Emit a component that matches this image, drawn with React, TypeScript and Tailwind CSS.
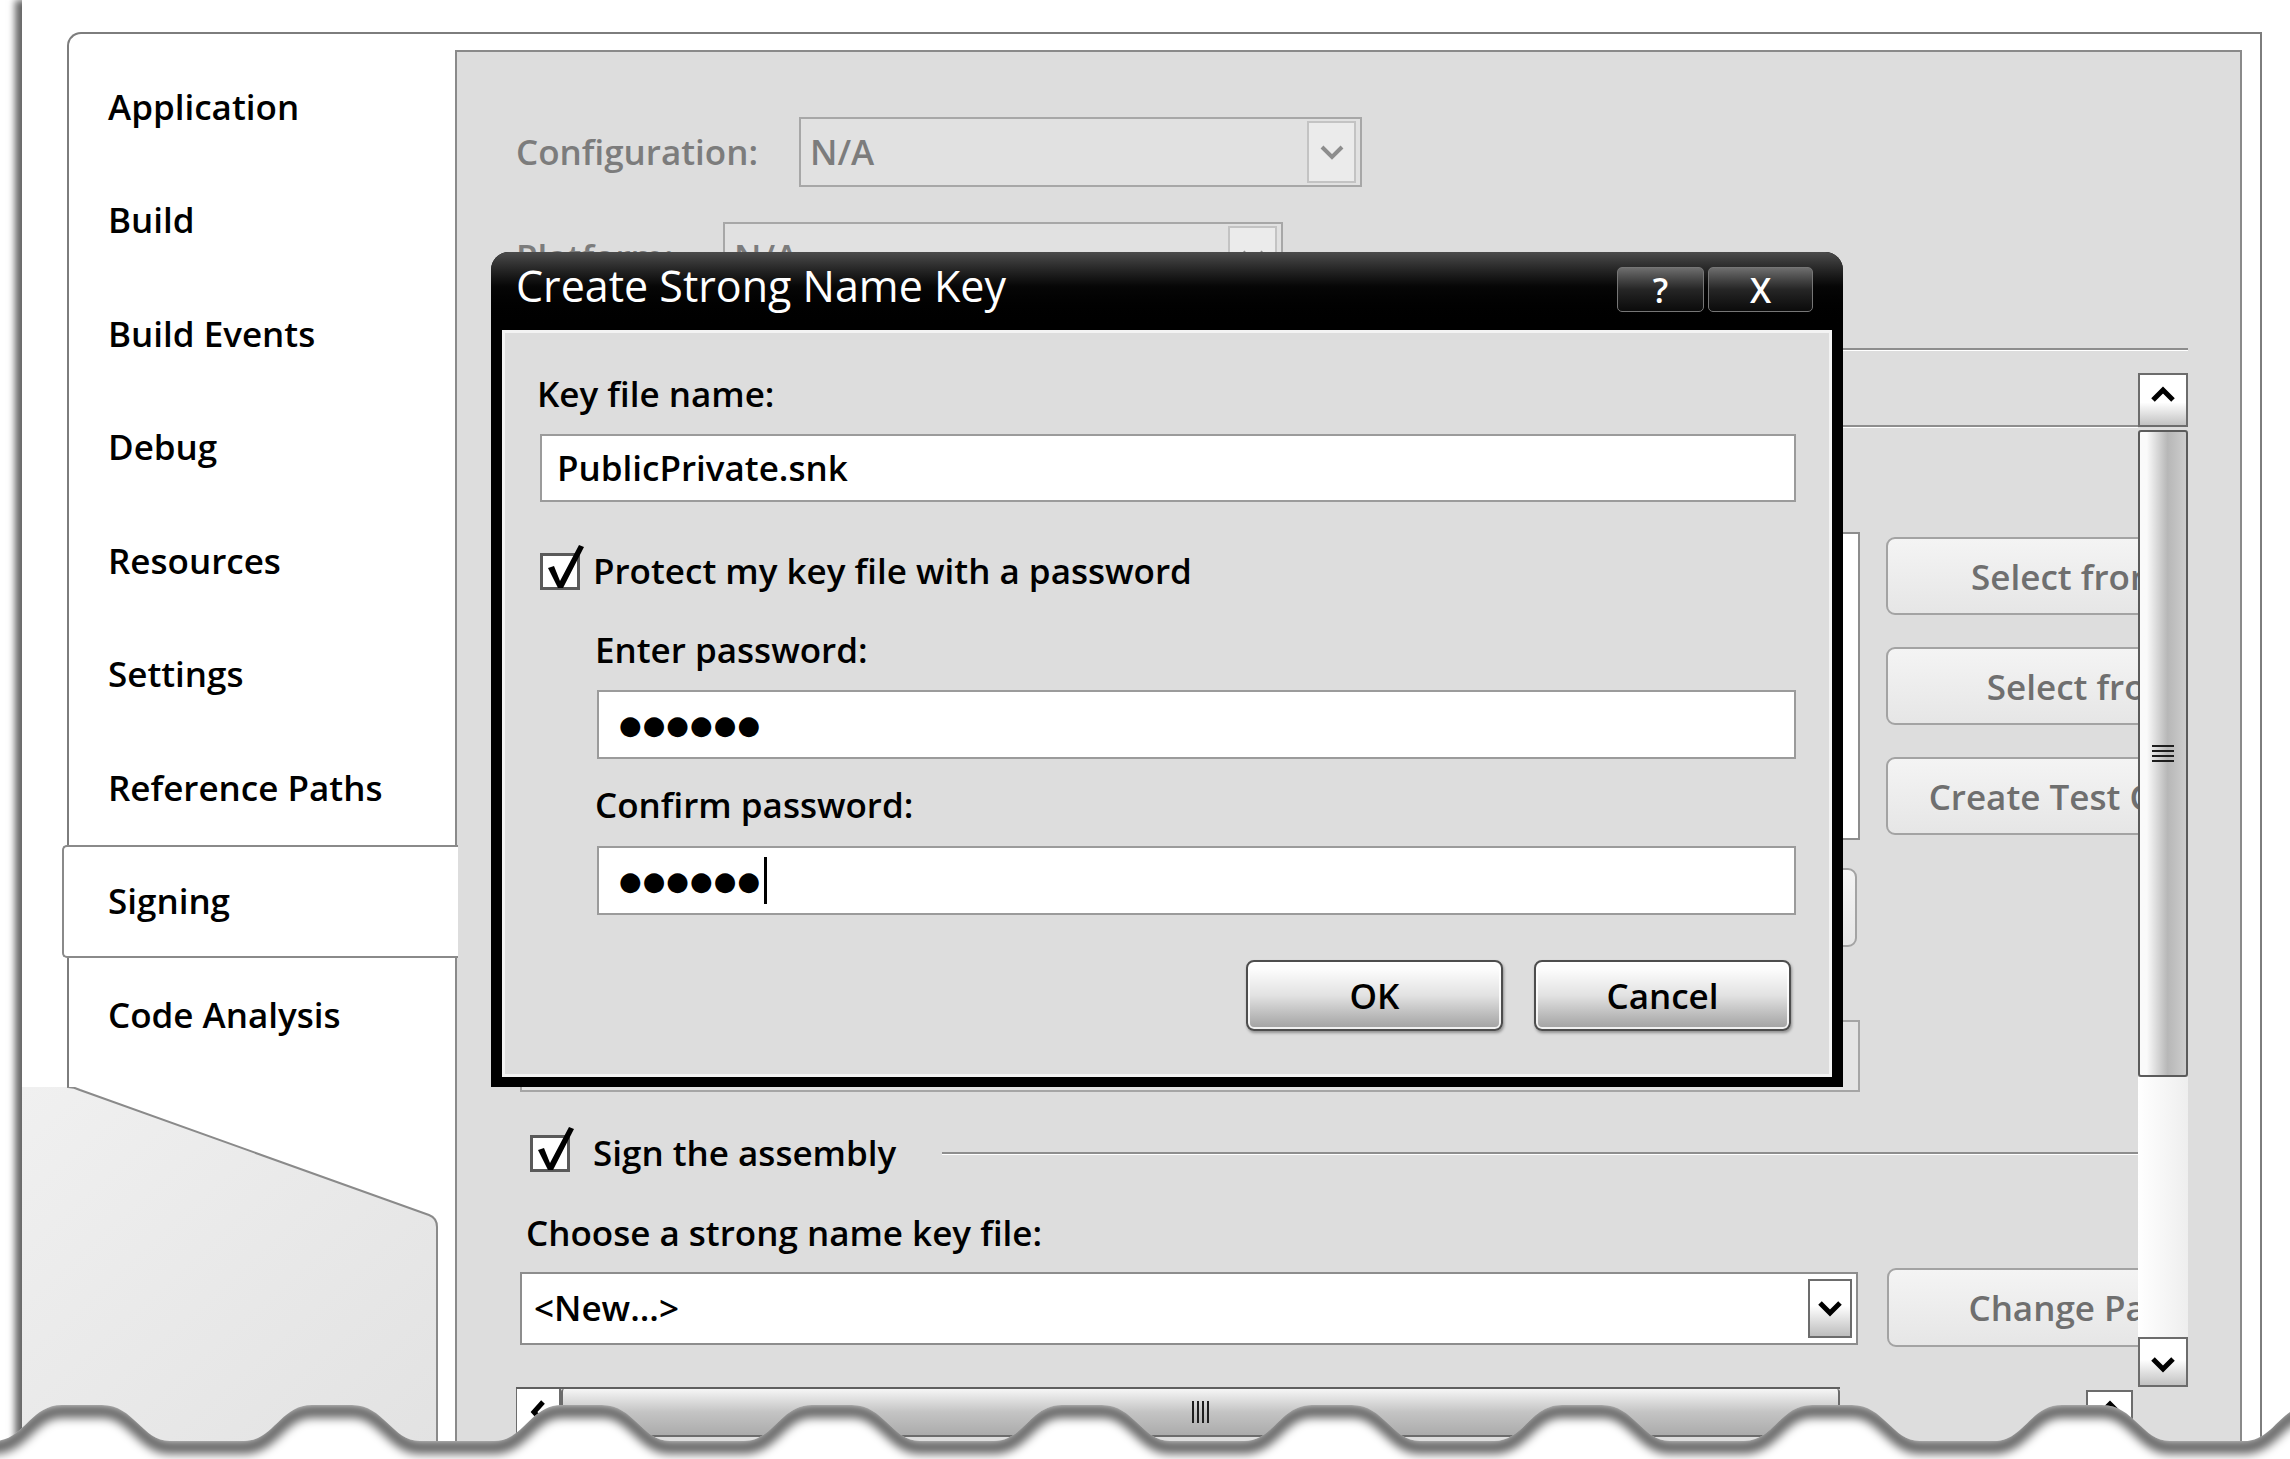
import React from "react";

const tabs = [
  "Application",
  "Build",
  "Build Events",
  "Debug",
  "Resources",
  "Settings",
  "Reference Paths",
  "Signing",
  "Code Analysis",
];

function Chevron({ dir, color = "#000", stroke = 5 }: { dir: "up" | "down" | "left"; color?: string; stroke?: number }) {
  const d = dir === "up" ? "M3 14 L13 4 L23 14" : dir === "down" ? "M3 3 L13 13 L23 3" : "M14 3 L5 13 L14 23";
  const size = dir === "left" ? { w: 18, h: 26 } : { w: 26, h: 17 };
  return (
    <svg width={size.w} height={size.h} viewBox={`0 0 ${size.w} ${size.h}`}>
      <path d={d} fill="none" stroke={color} strokeWidth={stroke} />
    </svg>
  );
}

function CheckBox() {
  return (
    <div className="relative h-[37px] w-[40px] shrink-0 border-[3px] border-[#5a5a5a] bg-white">
      <svg className="absolute -top-[14px] left-0" width="44" height="50" viewBox="0 0 44 50">
        <polygon points="5,26 11,24 17,39 36,3 41,5 20,46 15,46" fill="#000" />
      </svg>
    </div>
  );
}

function DisabledCombo({ className, value }: { className: string; value: string }) {
  return (
    <div className={`flex h-[70px] shrink-0 items-center border-2 border-[#a7a7a7] bg-[#e1e1e1] pl-[9px] pr-[4px] ${className}`}>
      <span className="flex-1 text-[35px] leading-[50px] text-[#7c7c7c]">{value}</span>
      <div className="flex h-[62px] w-[49px] items-center justify-center border-2 border-[#c3c3c3] bg-[#ebebeb]">
        <Chevron dir="down" color="#8d8d8d" stroke={4} />
      </div>
    </div>
  );
}

function GhostButton({ label, className }: { label: string; className: string }) {
  return (
    <div
      className={`flex w-[490px] shrink-0 items-center justify-center rounded-[9px] border-2 border-[#a3a3a3] bg-linear-to-b from-[#f4f4f4] to-[#e6e6e6] text-[35px] leading-none text-[#6f6f6f] ${className}`}
    >
      {label}
    </div>
  );
}

function DialogButton({ label }: { label: string }) {
  return (
    <div className="flex h-[71px] w-[257px] items-center justify-center rounded-[8px] border-2 border-[#4d4d4d] bg-linear-to-b from-[#fdfdfd] from-10% via-[#e2e2e2] via-50% to-[#a1a1a1] text-[35px] leading-none text-black shadow-[inset_0_0_0_2px_rgba(255,255,255,0.85),1px_2px_3px_rgba(0,0,0,0.35)]">
      {label}
    </div>
  );
}

function TitleButton({ label, className }: { label: string; className: string }) {
  return (
    <div
      className={`flex h-[45px] items-center justify-center rounded-[5px] border border-[#767676] bg-linear-to-b from-[#6e6e6e] via-[#262626] to-[#0b0b0b] text-[34px] leading-none text-white ${className}`}
    >
      {label}
    </div>
  );
}

function VScrollBar() {
  return (
    <div className="flex w-[50px] shrink-0 flex-col">
      <div className="flex h-[54px] shrink-0 items-start justify-center border-2 border-[#6c6c6c] bg-linear-to-b from-white from-55% to-[#c2c2c2] pt-[11px]">
        <Chevron dir="up" />
      </div>
      <div className="mt-[3px] flex h-[647px] shrink-0 items-center justify-center rounded-[3px] border-2 border-[#5b5b5b] bg-linear-to-r from-[#fafafa] from-15% via-[#b7b7b7] via-60% to-[#cdcdcd]">
        <div className="flex flex-col gap-[3px]">
          {[0, 1, 2, 3].map((i) => (
            <div key={i} className="h-[2px] w-[22px] bg-[#1e1e1e]" />
          ))}
        </div>
      </div>
      <div className="h-[260px] shrink-0 bg-linear-to-r from-white to-[#eeeeee]" />
      <div className="flex h-[50px] shrink-0 items-end justify-center border-2 border-[#6c6c6c] bg-linear-to-b from-white from-45% to-[#c2c2c2] pb-[12px]">
        <Chevron dir="down" />
      </div>
    </div>
  );
}

function LeftColumn() {
  return (
    <div className="flex w-[433px] shrink-0 flex-col">
      <div className="h-[32px] shrink-0" />
      <div className="ml-[45px] h-[1055px] shrink-0 rounded-tl-[14px] border-l-2 border-t-2 border-[#7d7d7d] bg-white pt-[16px]">
        {tabs.map((t) =>
          t === "Signing" ? (
            <div
              key={t}
              className="relative z-10 -ml-[7px] -mr-[3px] flex h-[113.5px] items-center rounded-l-[5px] border-y-2 border-l-2 border-[#8a8a8a] bg-white pl-[44px] text-[35px]"
            >
              {t}
            </div>
          ) : (
            <div key={t} className="flex h-[113.5px] items-center pl-[39px] text-[35px]">
              {t}
            </div>
          )
        )}
      </div>
      {/* page curl under the tab list */}
      <div className="relative flex-1">
        <svg className="absolute inset-0" width="433" height="372" viewBox="0 0 433 372">
          <defs>
            <linearGradient id="tailFill" x1="0" y1="0" x2="1" y2="1">
              <stop offset="0" stopColor="#f0f0f0" />
              <stop offset="1" stopColor="#e2e2e2" />
            </linearGradient>
          </defs>
          <path d="M0 0 H46 Q52 0 58 3 L407 128 Q415 131 415 140 V372 H0 Z" fill="url(#tailFill)" />
          <path d="M46 -2 V0 Q52 0 58 3 L407 128 Q415 131 415 140 V372" fill="none" stroke="#8a8a8a" strokeWidth="2" />
        </svg>
      </div>
    </div>
  );
}

function Panel() {
  return (
    <div className="flex min-h-0 min-w-0 flex-1 flex-col border-2 border-b-0 border-[#8a8a8a] bg-[#dddddd] pl-[59px] pr-[52px] pt-[65px]">
      <div className="flex h-[70px] shrink-0 items-center">
        <span className="w-[283px] shrink-0 text-[35px] text-[#7c7c7c]">Configuration:</span>
        <DisabledCombo className="w-[563px]" value="N/A" />
      </div>
      <div className="mt-[35px] flex h-[70px] shrink-0 items-center">
        <span className="w-[207px] shrink-0 text-[35px] text-[#7c7c7c]">Platform:</span>
        <DisabledCombo className="w-[560px]" value="N/A" />
      </div>
      <div className="mt-[56px] h-[3px] shrink-0 border-t-2 border-[#8d8d8d] bg-white" />

      <div className="mt-[22px] flex min-h-0 min-w-0 flex-1">
        <div className="flex min-w-0 flex-1 flex-col overflow-hidden">
          <div className="mt-[52px] h-[3px] shrink-0 border-t-2 border-[#8d8d8d] bg-white" />

          <div className="mt-[104px] flex shrink-0 items-start">
            <div className="ml-[4px] h-[308px] w-[1340px] shrink-0 border-2 border-[#8d8d8d] bg-white" />
            <div className="ml-[26px] flex shrink-0 flex-col gap-[32px] pt-[5px]">
              <GhostButton className="h-[78px]" label="Select from Store..." />
              <GhostButton className="h-[78px]" label="Select from File..." />
              <GhostButton className="h-[78px]" label="Create Test Certificate..." />
            </div>
          </div>

          <div className="ml-[981px] mt-[28px] flex h-[79px] w-[360px] shrink-0 items-center justify-center rounded-[9px] border-2 border-[#a3a3a3] bg-linear-to-b from-[#f4f4f4] to-[#e6e6e6] text-[35px] text-[#6f6f6f]">
            More Details
          </div>

          <div className="ml-[4px] mt-[73px] h-[72px] w-[1340px] shrink-0 border-2 border-[#a5a5a5] bg-[#e4e4e4]" />

          <div className="ml-[14px] mt-[36px] flex h-[50px] shrink-0 items-center">
            <CheckBox />
            <span className="ml-[23px] shrink-0 text-[35px]">Sign the assembly</span>
            <div className="ml-[46px] h-[3px] flex-1 border-t-2 border-[#8d8d8d] bg-white" />
          </div>

          <div className="ml-[10px] mt-[30px] flex h-[50px] shrink-0 items-center text-[35px]">
            Choose a strong name key file:
          </div>

          <div className="mt-[10px] flex shrink-0 items-start">
            <div className="ml-[4px] mt-[4px] flex h-[73px] w-[1338px] shrink-0 items-center border-2 border-[#8d8d8d] bg-white pl-[12px] pr-[4px]">
              <span className="flex-1 text-[35px]">&lt;New...&gt;</span>
              <div className="flex h-[59px] w-[44px] items-center justify-center border-2 border-[#6c6c6c] bg-linear-to-b from-white from-45% to-[#bdbdbd]">
                <Chevron dir="down" />
              </div>
            </div>
            <GhostButton className="ml-[29px] h-[79px]" label="Change Password..." />
          </div>

          <div className="-ml-[1px] mt-[40px] flex shrink-0 items-start">
            <div className="flex h-[50px] w-[1325px] shrink-0 border-t-2 border-[#5f5f5f]">
              <div className="flex w-[46px] items-center justify-center border-2 border-t-0 border-[#6c6c6c] bg-white">
                <Chevron dir="left" />
              </div>
              <div className="flex flex-1 items-center justify-center rounded-[3px] border-2 border-t-0 border-[#6c6c6c] bg-linear-to-b from-[#f6f6f6] via-[#c4c4c4] to-[#ababab]">
                <div className="flex gap-[3px]">
                  {[0, 1, 2, 3].map((i) => (
                    <div key={i} className="h-[22px] w-[2px] bg-[#1e1e1e]" />
                  ))}
                </div>
              </div>
            </div>
            <div className="ml-[246px] mt-[3px] flex h-[50px] w-[47px] shrink-0 items-start justify-center border-2 border-[#6c6c6c] bg-white pt-[8px]">
              <Chevron dir="up" />
            </div>
          </div>
        </div>
        <VScrollBar />
      </div>
    </div>
  );
}

function Dialog() {
  return (
    <div className="absolute left-[491px] top-[252px] flex h-[835px] w-[1352px] flex-col rounded-t-[18px] bg-black px-[11px] pb-[10px]">
      <div className="-mx-[11px] flex h-[78px] shrink-0 items-start rounded-t-[18px] bg-linear-to-b from-[#4c4c4c] via-[#060606] via-45% to-black pl-[25px] pr-[30px]">
        <span className="flex-1 pt-[12px] text-[43px] font-normal leading-none text-white">Create Strong Name Key</span>
        <div className="mt-[15px] flex gap-[4px]">
          <TitleButton className="w-[87px]" label="?" />
          <TitleButton className="w-[105px]" label="X" />
        </div>
      </div>
      <div className="flex flex-1 flex-col border-[3px] border-[#f3f3f3] bg-[#dddddd] pl-[32px] pr-[33px]">
        <div className="mt-[36px] text-[35px] leading-[50px]">Key file name:</div>
        <div className="ml-[3px] mt-[15px] flex h-[68px] items-center border-2 border-[#9b9b9b] bg-white pl-[15px] text-[35px]">
          PublicPrivate.snk
        </div>
        <div className="ml-[3px] mt-[44px] flex h-[50px] items-center">
          <CheckBox />
          <span className="ml-[13px] text-[35px] leading-[50px]">Protect my key file with a password</span>
        </div>
        <div className="ml-[58px] mt-[29px] text-[35px] leading-[50px]">Enter password:</div>
        <div className="ml-[60px] mt-[15px] flex h-[69px] items-center border-2 border-[#9b9b9b] bg-white pl-[20px]">
          <span className="font-['DejaVu_Sans',sans-serif] text-[26px] leading-none tracking-[1px]">●●●●●●</span>
        </div>
        <div className="ml-[58px] mt-[21px] text-[35px] leading-[50px]">Confirm password:</div>
        <div className="ml-[60px] mt-[16px] flex h-[69px] items-center border-2 border-[#9b9b9b] bg-white pl-[20px]">
          <span className="font-['DejaVu_Sans',sans-serif] text-[26px] leading-none tracking-[1px]">●●●●●●</span>
          <span className="ml-[3px] h-[47px] w-[3px] bg-black" />
        </div>
        <div className="mt-[45px] flex justify-end gap-[31px] pr-[5px]">
          <DialogButton label="OK" />
          <DialogButton label="Cancel" />
        </div>
      </div>
    </div>
  );
}

function TornEdge() {
  let edge = "M -188 25";
  for (let x0 = -188; x0 < 2400; x0 += 250) {
    edge += ` L ${x0 + 40} 25 C ${x0 + 72} 25 ${x0 + 80} 61 ${x0 + 108} 61 L ${x0 + 182} 61 C ${x0 + 212} 61 ${x0 + 218} 25 ${x0 + 250} 25`;
  }
  const fill = `${edge} L 2600 95 L -188 95 Z`;
  return (
    <svg className="absolute bottom-0 left-0" width="2290" height="79" viewBox="0 0 2290 79">
      <defs>
        <filter id="tornBlur" x="-5%" y="-100%" width="110%" height="300%">
          <feGaussianBlur stdDeviation="5" />
        </filter>
        <clipPath id="tornClip">
          <path d={fill} />
        </clipPath>
      </defs>
      <path d={fill} fill="#ffffff" />
      <g clipPath="url(#tornClip)">
        <path
          d={edge}
          transform="translate(0 6)"
          fill="none"
          stroke="#000"
          strokeOpacity="0.6"
          strokeWidth="14"
          filter="url(#tornBlur)"
        />
      </g>
    </svg>
  );
}

export default function App() {
  return (
    <div className="relative h-[1459px] w-[2290px] overflow-hidden bg-white font-['Open_Sans','Noto_Sans',sans-serif] font-semibold text-black">
      <div className="ml-[22px] flex h-full bg-white shadow-[-7px_0_7px_rgba(0,0,0,0.6)]">
        <LeftColumn />
        <div className="flex min-w-0 flex-1 flex-col pr-[28px] pt-[32px]">
          <div className="flex min-h-0 min-w-0 flex-1 flex-col border-r-2 border-t-2 border-[#7d7d7d] pr-[18px] pt-[16px]">
            <Panel />
          </div>
        </div>
      </div>
      <Dialog />
      <TornEdge />
    </div>
  );
}
